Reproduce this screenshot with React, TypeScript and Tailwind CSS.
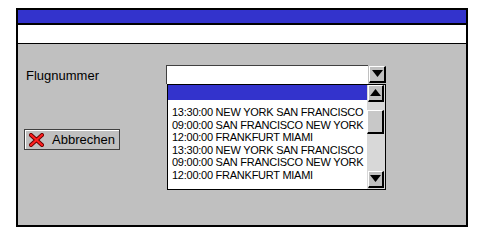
import React from "react";

const rows = [
  "13:30:00 NEW YORK SAN FRANCISCO",
  "09:00:00 SAN FRANCISCO NEW YORK",
  "12:00:00 FRANKFURT MIAMI",
  "13:30:00 NEW YORK SAN FRANCISCO",
  "09:00:00 SAN FRANCISCO NEW YORK",
  "12:00:00 FRANKFURT MIAMI",
];

function Tri({ up }: { up?: boolean }) {
  return (
    <svg width="11" height="8" viewBox="0 0 11 8">
      {up ? <polygon points="0,7 11,7 5.5,0" fill="#000" /> : <polygon points="0,0 11,0 5.5,7" fill="#000" />}
    </svg>
  );
}

function BevelBtn({ up, className }: { up?: boolean; className?: string }) {
  return (
    <div
      className={
        "flex items-center justify-center bg-[#c0c0c0] border-t border-l border-t-white border-l-white border-b-2 border-r-2 border-b-black border-r-black " +
        (className ?? "")
      }
    >
      <Tri up={up} />
    </div>
  );
}

export default function App() {
  return (
    <div
      className="w-[478px] h-[238px] bg-white pt-[8px] pl-[16px] text-black"
      style={{ fontFamily: '"Liberation Sans", Arial, sans-serif' }}
    >
      <div className="w-[452px] h-[219px] border-2 border-black flex flex-col">
        <div className="h-[13px] bg-[#3333cc] border-b-2 border-black box-content" />
        <div className="h-[18px] bg-white border-b border-black box-content" />
        <div className="flex-1 bg-[#c0c0c0] flex flex-col">
          <div className="flex items-start pt-[21px] pl-[8px]">
            <div className="w-[140px] text-[13px] leading-[15px] pt-[3px]">Flugnummer</div>
            <div className="relative w-[220px] h-[19px] flex">
              <div className="w-[202px] h-[19px] bg-white border-t border-l border-[#404040]" />
              <BevelBtn className="w-[17px] h-[17px] mt-[1px] ml-[1px]" />
              <div className="absolute left-[1px] top-[19px] w-[219px] h-[106px] bg-white border border-black flex">
                <div className="flex-1 flex flex-col overflow-hidden">
                  <div className="h-[15px] bg-[#3333cc]" />
                  <div className="mt-[6px] pl-[4px] text-[11px] leading-[12.5px] whitespace-nowrap tracking-[-0.25px]">
                    {rows.map((r, i) => (
                      <div key={i}>{r}</div>
                    ))}
                  </div>
                </div>
                <div className="w-[18px] bg-[#d8d8d8] flex flex-col">
                  <BevelBtn up className="w-[16px] h-[17px] ml-[1px]" />
                  <div className="w-[17px] h-[24px] mt-[8px] bg-[#c8c8c8] border-t border-l border-t-white border-l-white border-b-2 border-r-2 border-b-black border-r-black" />
                  <div className="flex-1" />
                  <BevelBtn className="w-[16px] h-[17px] ml-[1px] mb-[1px]" />
                </div>
              </div>
            </div>
          </div>
          <div className="pl-[6px] mt-[45px]">
            <div className="w-[96px] h-[21px] border border-[#404040] shadow-[inset_1px_1px_0_#ffffff] flex items-center pl-[4px] gap-[8px]">
              <svg width="15" height="14" viewBox="0 0 15 14">
                <path d="M2 2 L13 12 M13 2 L2 12" stroke="#600" strokeWidth="4" strokeLinecap="square" />
                <path d="M2 2 L13 12 M13 2 L2 12" stroke="#ff2020" strokeWidth="2.2" strokeLinecap="square" />
              </svg>
              <span className="text-[13px] leading-[15px]">Abbrechen</span>
            </div>
          </div>
        </div>
      </div>
    </div>
  );
}
